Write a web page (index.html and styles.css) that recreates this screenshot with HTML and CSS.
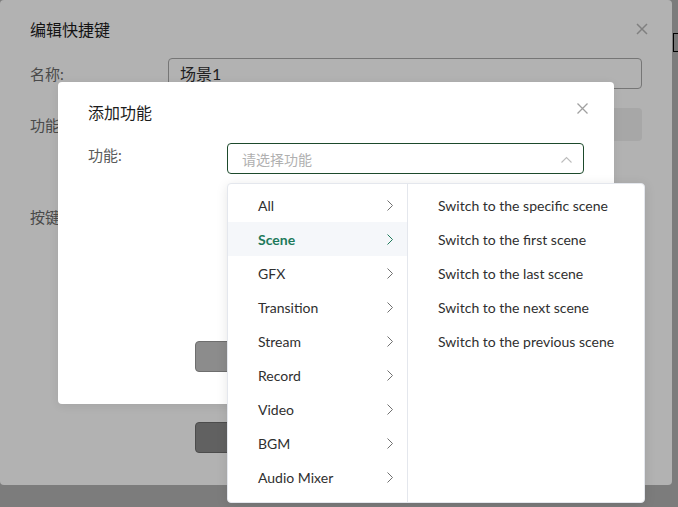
FILE: index.html
```html
<!DOCTYPE html>
<html lang="zh-CN">
<head>
<meta charset="utf-8">
<link rel="stylesheet" href="styles.css">
</head>
<body>
<div class="page"><div class="page-box"></div></div>
<div class="mask"></div>

<div class="dialog outer">
  <div class="dlg-head">
    <span class="dlg-title">编辑快捷键</span>
    <svg class="close outer-close" width="12" height="12" viewBox="0 0 12 12"><path d="M1 1L11 11M11 1L1 11"/></svg>
  </div>
  <div class="form">
    <div class="row row-name"><span class="lbl">名称:</span><div class="input">场景1</div></div>
    <div class="row row-fn"><span class="lbl">功能:</span><div class="fn-box"></div></div>
    <div class="row row-key"><span class="lbl">按键:</span><div class="key-box"></div></div>
  </div>
  <div class="footer"><button class="btn" aria-label="取消"></button><button class="btn" aria-label="确定"></button></div>
</div>

<div class="mask"></div>

<div class="dialog inner">
  <div class="dlg-head">
    <span class="dlg-title">添加功能</span>
    <svg class="close inner-close" width="11" height="11" viewBox="0 0 11 11"><path d="M0.5 0.5L10.5 10.5M10.5 0.5L0.5 10.5"/></svg>
  </div>
  <div class="inner-form">
    <span class="lbl inner-lbl">功能:</span>
    <div class="select-wrap">
      <div class="select">
        <span class="placeholder">请选择功能</span>
        <svg class="arrow-up" width="11" height="7" viewBox="0 0 11 7"><path d="M0.5 6.5L5.5 1.5L10.5 6.5"/></svg>
      </div>
      <div class="cascader">
        <ul class="menu menu-left">
          <li class="item"><span>All</span><svg class="chev" width="6" height="11" viewBox="0 0 6 11"><path d="M0.5 0.5L5.5 5.5L0.5 10.5"/></svg></li>
          <li class="item active"><span>Scene</span><svg class="chev" width="6" height="11" viewBox="0 0 6 11"><path d="M0.5 0.5L5.5 5.5L0.5 10.5"/></svg></li>
          <li class="item"><span>GFX</span><svg class="chev" width="6" height="11" viewBox="0 0 6 11"><path d="M0.5 0.5L5.5 5.5L0.5 10.5"/></svg></li>
          <li class="item"><span>Transition</span><svg class="chev" width="6" height="11" viewBox="0 0 6 11"><path d="M0.5 0.5L5.5 5.5L0.5 10.5"/></svg></li>
          <li class="item"><span>Stream</span><svg class="chev" width="6" height="11" viewBox="0 0 6 11"><path d="M0.5 0.5L5.5 5.5L0.5 10.5"/></svg></li>
          <li class="item"><span>Record</span><svg class="chev" width="6" height="11" viewBox="0 0 6 11"><path d="M0.5 0.5L5.5 5.5L0.5 10.5"/></svg></li>
          <li class="item"><span>Video</span><svg class="chev" width="6" height="11" viewBox="0 0 6 11"><path d="M0.5 0.5L5.5 5.5L0.5 10.5"/></svg></li>
          <li class="item"><span>BGM</span><svg class="chev" width="6" height="11" viewBox="0 0 6 11"><path d="M0.5 0.5L5.5 5.5L0.5 10.5"/></svg></li>
          <li class="item"><span>Audio Mixer</span><svg class="chev" width="6" height="11" viewBox="0 0 6 11"><path d="M0.5 0.5L5.5 5.5L0.5 10.5"/></svg></li>
        </ul>
        <ul class="menu menu-right">
          <li class="item">Switch to the specific scene</li>
          <li class="item">Switch to the first scene</li>
          <li class="item">Switch to the last scene</li>
          <li class="item">Switch to the next scene</li>
          <li class="item">Switch to the previous scene</li>
        </ul>
      </div>
    </div>
  </div>
  <div class="footer inner-footer"><button class="btn" aria-label="取消"></button><button class="btn" aria-label="确定"></button></div>
</div>
</body>
</html>
```

FILE: styles.css
```css
* { box-sizing: border-box; }
html, body { margin: 0; padding: 0; }
body {
  width: 678px;
  height: 507px;
  overflow: hidden;
  background: #ffffff;
  font-family: "Lato", "Noto Sans CJK SC", sans-serif;
  position: relative;
}
.page {
  display: flex;
  justify-content: flex-end;
  padding-top: 33px;
}
.page-box {
  width: 5px;
  height: 19px;
  border: 1px solid #000;
  border-right: none;
  background: #f2f2f2;
}
.mask {
  position: absolute;
  inset: 0;
  background: rgba(0, 0, 0, 0.3);
}
.dialog {
  position: absolute;
  background: #fff;
  border-radius: 4px;
  display: flex;
  flex-direction: column;
}
.outer {
  left: 0;
  top: 0;
  width: 672px;
  height: 485px;
  padding: 0 30px 32px;
}
.inner {
  left: 58px;
  top: 82px;
  width: 556px;
  height: 322px;
  padding: 0 30px 32px;
  box-shadow: 0 2px 10px rgba(0, 0, 0, 0.08);
}
.dlg-head {
  position: relative;
  padding-top: 18px;
  height: 44px;
}
.inner .dlg-head { padding-top: 19px; height: 43px; }
.dlg-title {
  display: block;
  font-size: 16px;
  line-height: 24px;
  color: #1c1c1c;
}
.close { position: absolute; fill: none; }
.outer-close { top: 23px; right: -6px; stroke: #b8b8b8; stroke-width: 1.5; }
.inner-close { top: 21px; right: -4px; stroke: #a0a0a0; stroke-width: 1.3; }

.form { margin-top: 14px; display: flex; flex-direction: column; }
.row { display: flex; align-items: center; }
.lbl {
  width: 138px;
  flex: none;
  font-size: 15px;
  color: #6a6a6a;
}
.row-name { height: 31px; }
.input {
  flex: 1;
  height: 31px;
  border: 1px solid #a9a9a9;
  border-radius: 4px;
  padding: 0 11px;
  font-size: 16px;
  line-height: 29px;
  color: #303030;
}
.row-fn { margin-top: 19px; height: 33px; }
.fn-box {
  flex: 1;
  height: 33px;
  border-radius: 4px;
  background: #f0f0f0;
}
.row-key { margin-top: 59px; height: 32px; }
.key-box { flex: 1; height: 32px; }

.footer {
  margin-top: auto;
  display: flex;
  justify-content: center;
  gap: 12px;
}
.btn {
  width: 135px;
  height: 31px;
  border: 1px solid #6e6e6e;
  border-radius: 4px;
  background: #8c8c8c;
  color: #fff;
  font-family: inherit;
  font-size: 14px;
}

.inner-form { margin-top: 18px; display: flex; align-items: flex-start; }
.inner-lbl { width: 139px; padding-top: 0; line-height: 24px; color: #5a5a5a; }
.select-wrap { position: relative; flex: 1; }
.select {
  height: 31px;
  border: 1px solid #1d4a2c;
  border-radius: 4px;
  display: flex;
  align-items: center;
  justify-content: space-between;
  padding: 0 11px 0 14px;
}
.placeholder { font-size: 14px; color: #b0b0b0; }
.arrow-up { fill: none; stroke: #bcbcbc; stroke-width: 1.1; margin-top: 1px; }

.cascader {
  position: absolute;
  left: 0;
  top: calc(100% + 9px);
  width: 418px;
  background: #fff;
  border: 1px solid #e4e7ed;
  border-radius: 4px;
  box-shadow: 0 2px 12px rgba(0, 0, 0, 0.1);
  display: flex;
  overflow: hidden;
  z-index: 2;
}
.menu {
  list-style: none;
  margin: 0;
  padding: 4px 0 8px;
}
.menu-left { width: 180px; border-right: 1px solid #e4e7ed; }
.menu-right { flex: 1; }
.item {
  height: 34px;
  display: flex;
  align-items: center;
  justify-content: space-between;
  font-size: 14px;
  color: #2f2f2f;
}
.menu-left .item { padding: 0 14px 0 30px; }
.menu-right .item { padding: 0 0 0 30px; }
.chev { fill: none; stroke: #707070; stroke-width: 1; }
.item.active { background: #f5f7fa; color: #1e7a5b; font-weight: 700; }
.item.active .chev { stroke: #1e7a5b; }
```
